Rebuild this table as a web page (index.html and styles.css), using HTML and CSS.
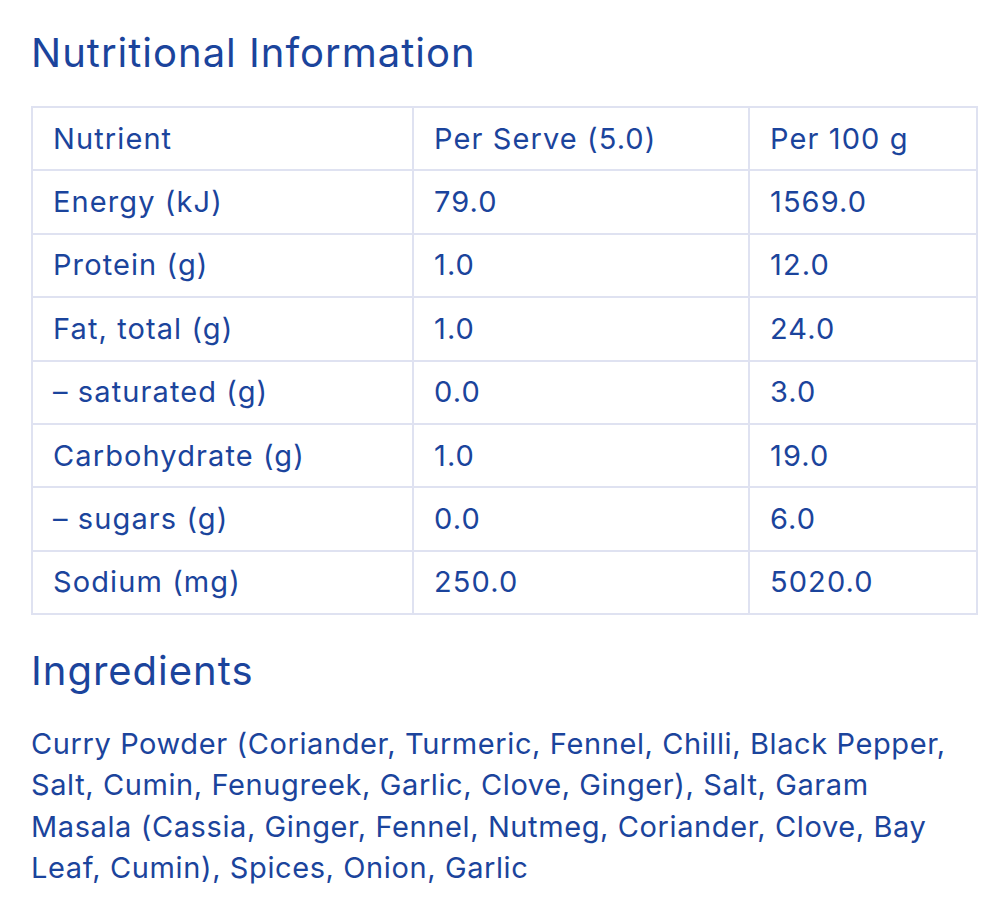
FILE: index.html
```html
<!DOCTYPE html>
<html>
<head>
<meta charset="utf-8">
<link rel="stylesheet" href="styles.css">
</head>
<body>
<div class="page">
  <h2 class="title">Nutritional Information</h2>
  <table class="nutri">
    <tr><td>Nutrient</td><td>Per Serve (5.0)</td><td>Per 100 g</td></tr>
    <tr><td>Energy (kJ)</td><td>79.0</td><td>1569.0</td></tr>
    <tr><td>Protein (g)</td><td>1.0</td><td>12.0</td></tr>
    <tr><td>Fat, total (g)</td><td>1.0</td><td>24.0</td></tr>
    <tr><td>– saturated (g)</td><td>0.0</td><td>3.0</td></tr>
    <tr><td>Carbohydrate (g)</td><td>1.0</td><td>19.0</td></tr>
    <tr><td>– sugars (g)</td><td>0.0</td><td>6.0</td></tr>
    <tr><td>Sodium (mg)</td><td>250.0</td><td>5020.0</td></tr>
  </table>
  <h2 class="title ing-title">Ingredients</h2>
  <p class="ingredients">Curry Powder (Coriander, Turmeric, Fennel, Chilli, Black Pepper, Salt, Cumin, Fenugreek, Garlic, Clove, Ginger), Salt, Garam Masala (Cassia, Ginger, Fennel, Nutmeg, Coriander, Clove, Bay Leaf, Cumin), Spices, Onion, Garlic</p>
</div>
</body>
</html>
```

FILE: styles.css
```css
html, body {
  margin: 0;
  padding: 0;
  background: #ffffff;
}
body {
  font-family: "Inter", "DejaVu Sans", sans-serif;
  color: #1b449c;
}
.page {
  padding: 27px 24px 0 31px;
}
.title {
  margin: 0;
  font-size: 40px;
  font-weight: 400;
  letter-spacing: 1px;
  line-height: 52px;
}
.nutri {
  margin-top: 27px;
  width: 947px;
  border-collapse: collapse;
  font-size: 29px;
  letter-spacing: 1.1px;
  line-height: 42px;
}
.nutri td {
  border: 2px solid #dfe2f1;
  padding: 9.7px 20px;
  text-align: left;
  vertical-align: middle;
}
.nutri td:nth-child(1) { width: 339px; }
.nutri td:nth-child(2) { width: 294px; }
.ing-title {
  margin-top: 30px;
}
.ingredients {
  margin: 26px 0 0 0;
  font-size: 29px;
  letter-spacing: 0.6px;
  line-height: 41.3px;
}
```
